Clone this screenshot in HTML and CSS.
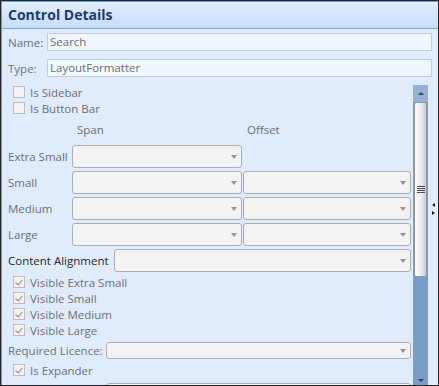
FILE: index.html
```html
<!DOCTYPE html>
<html lang="en">
<head>
  <meta charset="UTF-8">
  <meta name="viewport" content="width=device-width, initial-scale=1.0">
  <title>Control Details</title>
  <link rel="stylesheet" href="styles.css">
</head>
<body>
  <div class="window">
    <div class="title">Control Details</div>

    <div class="fields">
      <div class="field"><label>Name:</label><div class="textbox">Search</div></div>
      <div class="field"><label>Type:</label><div class="textbox">LayoutFormatter</div></div>
    </div>

    <div class="panel">
      <div class="content">
        <div class="check"><span class="box"></span>Is Sidebar</div>
        <div class="check"><span class="box"></span>Is Button Bar</div>

        <div class="grid">
          <span></span>
          <span class="col-head span-head">Span</span>
          <span class="col-head offset-head">Offset</span>

          <label>Extra Small</label>
          <div class="combo"></div>
          <span></span>

          <label>Small</label>
          <div class="combo"></div>
          <div class="combo"></div>

          <label>Medium</label>
          <div class="combo"></div>
          <div class="combo"></div>

          <label>Large</label>
          <div class="combo"></div>
          <div class="combo"></div>
        </div>

        <div class="row align-row">
          <label class="dark align-label">Content Alignment</label>
          <div class="combo wide"></div>
        </div>

        <div class="checks">
          <div class="check"><span class="box checked"></span>Visible Extra Small</div>
          <div class="check"><span class="box checked"></span>Visible Small</div>
          <div class="check"><span class="box checked"></span>Visible Medium</div>
          <div class="check"><span class="box checked"></span>Visible Large</div>
        </div>

        <div class="row licence-row">
          <label class="licence-label">Required Licence:</label>
          <div class="combo wide slim"></div>
        </div>

        <div class="check expander"><span class="box checked"></span>Is Expander</div>

        <div class="row next-row">
          <span class="licence-label"></span>
          <div class="combo wide slim"></div>
        </div>
      </div>

      <div class="scrollbar">
        <div class="sb-up"></div>
        <div class="sb-thumb"><span class="grip"></span></div>
        <div class="sb-track"></div>
      </div>

      <div class="splitter">
        <span class="arrow-l"></span>
        <span class="arrow-r"></span>
      </div>
    </div>
  </div>
</body>
</html>
```

FILE: styles.css
```css
* {
  box-sizing: border-box;
}
body {
  margin: 0;
  background: #262626;
  font-family: 'Open Sans', 'Noto Sans', sans-serif;
  font-size: 11.5px;
  color: #6f6f6f;
  overflow: hidden;
}
label {
  flex-shrink: 0;
}
.window {
  width: 437px;
  height: 384px;
  margin: 1px;
  background: #e0ebfc;
  border-left: 1px solid #6e9cdb;
  display: flex;
  flex-direction: column;
  overflow: hidden;
}
.title {
  height: 28px;
  padding-left: 6px;
  border-top: 1px solid #6e9cdb;
  border-bottom: 1px solid #7ba6de;
  background: linear-gradient(#e3eefd, #c6ddf8);
  color: #1b3a72;
  font-size: 14px;
  font-weight: bold;
  line-height: 26px;
}
.fields {
  display: flex;
  flex-direction: column;
  gap: 8px;
  padding: 4px 6px 0 6px;
}
.field {
  display: flex;
  align-items: center;
  height: 18px;
}
.field label {
  width: 39px;
}
.textbox {
  flex: 1;
  height: 18px;
  padding-left: 2px;
  border: 1px solid #c4ccd8;
  background: #f0f6fe;
  line-height: 16px;
}
.panel {
  flex: 1;
  display: flex;
  margin-top: 7px;
  min-height: 0;
  overflow: hidden;
}
.content {
  width: 409px;
  padding-left: 6px;
  flex-shrink: 0;
}
.check {
  display: flex;
  align-items: center;
  gap: 5px;
  height: 16px;
  padding-left: 5px;
}
.box {
  width: 12px;
  height: 12px;
  border: 1px solid #bdbdbd;
  background: #f2f2f2;
  display: flex;
  align-items: center;
  justify-content: center;
}
.box.checked::after {
  content: "";
  width: 3px;
  height: 6px;
  margin-top: -2px;
  border-right: 1.5px solid #8c8c8c;
  border-bottom: 1.5px solid #8c8c8c;
  transform: rotate(40deg);
}
.grid {
  display: grid;
  grid-template-columns: 63px 170px 168px;
  grid-template-rows: 26px repeat(4, 23px);
  column-gap: 1px;
  row-gap: 3px;
  align-items: center;
}
.col-head {
  align-self: center;
}
.span-head {
  padding-left: 5px;
}
.offset-head {
  padding-left: 4px;
}
.combo {
  height: 23px;
  border: 1px solid #adadad;
  border-radius: 3px;
  background: #f3f3f3;
  display: flex;
  align-items: center;
  justify-content: flex-end;
  padding-right: 4px;
}
.combo::after {
  content: "";
  border-left: 3.5px solid transparent;
  border-right: 3.5px solid transparent;
  border-top: 4px solid #959595;
}
.row {
  display: flex;
  align-items: center;
}
.wide {
  flex: 1;
}
.slim {
  height: 17px;
}
.dark {
  color: #262626;
}
.align-row {
  margin-top: 3px;
}
.align-label {
  width: 106px;
}
.checks {
  margin-top: 2px;
}
.licence-row {
  margin-top: 4px;
}
.licence-label {
  width: 98px;
  flex-shrink: 0;
}
.expander {
  margin-top: 3px;
}
.next-row {
  margin-top: 5px;
}
.scrollbar {
  width: 15px;
  margin: 1px 0 0 2px;
  display: flex;
  flex-direction: column;
  background: #7c9cc8;
  flex-shrink: 0;
}
.sb-up {
  height: 17px;
  background: #98b0d6;
  display: flex;
  align-items: center;
  justify-content: center;
}
.sb-up::after {
  content: "";
  border-left: 3px solid transparent;
  border-right: 3px solid transparent;
  border-bottom: 3px solid #33476b;
}
.sb-thumb {
  height: 175px;
  margin: 0 1px;
  border: 1px solid #8a96ab;
  border-radius: 2px;
  background: linear-gradient(to right, #fdfdfd, #ececec 55%, #cdcdcd);
  display: flex;
  align-items: center;
  justify-content: center;
}
.grip {
  width: 8px;
  height: 7px;
  background: repeating-linear-gradient(#4a4a4a 0 1px, transparent 1px 2px);
}
.sb-track {
  flex: 1;
  display: flex;
  align-items: flex-end;
  justify-content: center;
  padding-bottom: 3px;
}
.sb-track::after {
  content: "";
  border-left: 3px solid transparent;
  border-right: 3px solid transparent;
  border-top: 3px solid #2f3e5a;
}
.splitter {
  flex: 1;
  display: flex;
  flex-direction: column;
  align-items: center;
  gap: 4px;
  padding-top: 119px;
}
.arrow-l {
  border-top: 2px solid transparent;
  border-bottom: 2px solid transparent;
  border-right: 3px solid #1c1c1c;
}
.arrow-r {
  border-top: 2px solid transparent;
  border-bottom: 2px solid transparent;
  border-left: 3px solid #1c1c1c;
}
```
